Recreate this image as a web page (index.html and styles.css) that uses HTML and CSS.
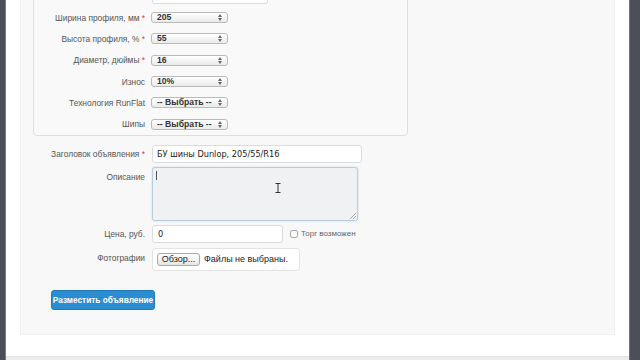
FILE: index.html
```html
<!DOCTYPE html>
<html lang="ru">
<head>
<meta charset="utf-8">
<title>Подать объявление</title>
<link rel="stylesheet" href="styles.css">
</head>
<body>
<div class="edge edge-left"></div>
<div class="page">
  <div class="content">
    <div class="panel">
      <div class="fieldset">
        <div class="row row-input"><span class="label"></span><div class="input input-top"></div></div>
        <div class="row row-sel"><span class="label">Ширина профиля, мм <i>*</i></span><div class="select"><span>205</span><svg class="arr" width="4" height="7" viewBox="0 0 4 7"><path d="M0 3 L2 0 L4 3Z M0 4 L2 7 L4 4Z" fill="#666"/></svg></div></div>
        <div class="row row-sel"><span class="label">Высота профиля, % <i>*</i></span><div class="select"><span>55</span><svg class="arr" width="4" height="7" viewBox="0 0 4 7"><path d="M0 3 L2 0 L4 3Z M0 4 L2 7 L4 4Z" fill="#666"/></svg></div></div>
        <div class="row row-sel"><span class="label">Диаметр, дюймы <i>*</i></span><div class="select"><span>16</span><svg class="arr" width="4" height="7" viewBox="0 0 4 7"><path d="M0 3 L2 0 L4 3Z M0 4 L2 7 L4 4Z" fill="#666"/></svg></div></div>
        <div class="row row-sel"><span class="label">Износ</span><div class="select"><span>10%</span><svg class="arr" width="4" height="7" viewBox="0 0 4 7"><path d="M0 3 L2 0 L4 3Z M0 4 L2 7 L4 4Z" fill="#666"/></svg></div></div>
        <div class="row row-sel"><span class="label">Технология RunFlat</span><div class="select"><span>-- Выбрать --</span><svg class="arr" width="4" height="7" viewBox="0 0 4 7"><path d="M0 3 L2 0 L4 3Z M0 4 L2 7 L4 4Z" fill="#666"/></svg></div></div>
        <div class="row row-sel"><span class="label">Шипы</span><div class="select"><span>-- Выбрать --</span><svg class="arr" width="4" height="7" viewBox="0 0 4 7"><path d="M0 3 L2 0 L4 3Z M0 4 L2 7 L4 4Z" fill="#666"/></svg></div></div>
      </div>

      <div class="form">
        <div class="frow frow-title"><span class="label">Заголовок объявления <i>*</i></span><div class="input input-title">БУ шины Dunlop, 205/55/R16</div></div>
        <div class="frow frow-desc"><span class="label">Описание</span>
          <div class="textarea"><span class="caret"></span>
            <svg class="grip" width="6" height="6" viewBox="0 0 6 6"><path d="M6 0 L0 6 M6 3 L3 6" stroke="#999" stroke-width="0.8"/></svg>
            <svg class="ibeam" width="6" height="10" viewBox="0 0 6 10"><path d="M0.5 0.5 H5.5 M3 0.5 V9.5 M0.5 9.5 H5.5" stroke="#333" stroke-width="1" fill="none"/></svg>
          </div>
        </div>
        <div class="frow frow-price"><span class="label">Цена, руб.</span><div class="input input-price">0</div><span class="check"><span class="box"></span>Торг возможен</span></div>
        <div class="frow frow-photo"><span class="label">Фотографии</span><div class="filebox"><span class="browse">Обзор...</span><span class="nofile">Файлы не выбраны.</span></div></div>
        <div class="actions"><span class="btn">Разместить объявление</span></div>
      </div>
    </div>
  </div>
  <div class="footer-line"></div>
</div>
<div class="edge edge-right"></div>
</body>
</html>
```

FILE: styles.css
```css
* { box-sizing: border-box; }
html, body { margin: 0; padding: 0; }
body {
  width: 640px;
  height: 360px;
  overflow: hidden;
  display: flex;
  background: #fff;
  font-family: "Liberation Sans", Arial, sans-serif;
  color: #333;
}
.edge { flex: none; height: 360px; }
.edge-left { width: 6px; background: #4a4f57; border-right: 1px solid #777b82; }
.edge-right { width: 11px; background: #4b5058; border-left: 1px solid #6d7178; }
.page {
  flex: 1;
  display: flex;
  flex-direction: column;
  height: 360px;
}
.content {
  flex: 1;
  padding: 0 14px 0 14px;
}
.panel {
  margin-top: -37px;
  padding: 12px 12px 24px;
  background: #f8f8f8;
  border: 1px solid #f1f1f1;
  border-top: none;
}
.fieldset {
  width: 375px;
  border: 1px solid #dedede;
  border-radius: 4px;
  padding: 10px 0 0 0;
  background: #f9f9f9;
}
.row { display: flex; align-items: center; }
.row-input { height: 18px; margin-bottom: 3px; }
.row-sel { height: 21.3px; }
.label {
  flex: none;
  width: 111px;
  margin-right: 6px;
  text-align: right;
  font-size: 8.4px;
  color: #555;
  white-space: nowrap;
}
.label i { font-style: normal; color: #d33; }
.input {
  height: 18px;
  background: #fff;
  border: 1px solid #dcdcdc;
  border-radius: 3px;
  font-family: "DejaVu Sans", sans-serif;
  font-size: 8.2px;
  color: #222;
  padding-left: 4px;
  display: flex;
  align-items: center;
}
.input-top { width: 116px; margin-left: 1px; }
.select {
  width: 77px;
  height: 11px;
  border: 1px solid #b9b9b9;
  border-radius: 3px;
  background: linear-gradient(#ffffff, #eaeaea);
  display: flex;
  align-items: center;
  justify-content: space-between;
  padding: 0 5px 0 5px;
  font-size: 8.6px;
  font-weight: bold;
  color: #333;
  line-height: 9px;
}
.select .arr { flex: none; }

.form { padding-top: 9px; }
.frow { display: flex; }
.frow .label { width: 112px; margin-right: 7px; }
.frow-title { height: 18px; align-items: center; margin-bottom: 4px; }
.input-title { width: 210px; }
.frow-desc { height: 54px; margin-bottom: 4px; }
.frow-desc .label { padding-top: 5px; }
.textarea {
  position: relative;
  width: 206px;
  height: 54px;
  background: #eff1f2;
  border: 1px solid #b8cddb;
  border-radius: 3px;
  box-shadow: 0 0 2px rgba(90, 150, 200, 0.35);
}
.caret {
  position: absolute;
  left: 3px;
  top: 3px;
  width: 1px;
  height: 9px;
  background: #555;
}
.grip { position: absolute; right: 1px; bottom: 1px; }
.ibeam { position: absolute; left: 122px; top: 15px; }
.frow-price { height: 18px; align-items: center; margin-bottom: 5px; }
.input-price { width: 131px; padding-left: 5px; }
.check {
  display: flex;
  align-items: center;
  margin-left: 7px;
  font-size: 8px;
  color: #666;
}
.box {
  width: 8px;
  height: 8px;
  border: 1px solid #aaa;
  border-radius: 2px;
  background: #fafafa;
  margin-right: 3px;
}
.frow-photo { height: 23px; margin-bottom: 18px; }
.frow-photo .label { padding-top: 5px; }
.filebox {
  width: 148px;
  height: 23px;
  background: #fff;
  border: 1px solid #e3e3e3;
  border-radius: 3px;
  display: flex;
  align-items: center;
  padding-left: 4px;
}
.browse {
  width: 43px;
  height: 13px;
  border: 1px solid #aaa;
  border-radius: 3px;
  background: linear-gradient(#fdfdfd, #e6e6e6);
  font-size: 9px;
  color: #222;
  display: flex;
  align-items: center;
  justify-content: center;
  margin-right: 4px;
}
.nofile {
  font-size: 9px;
  color: #222;
}
.actions { padding-left: 18px; }
.btn {
  display: inline-flex;
  align-items: center;
  justify-content: center;
  width: 104px;
  height: 20px;
  background: #2a8dd2;
  border: 1px solid #2079b8;
  border-radius: 3px;
  color: #fff;
  font-weight: bold;
  font-size: 8.3px;
}
.footer-line {
  height: 4px;
  margin-bottom: 0;
  background: #ececec;
  border-top: 1px solid #e2e2e2;
}
```
